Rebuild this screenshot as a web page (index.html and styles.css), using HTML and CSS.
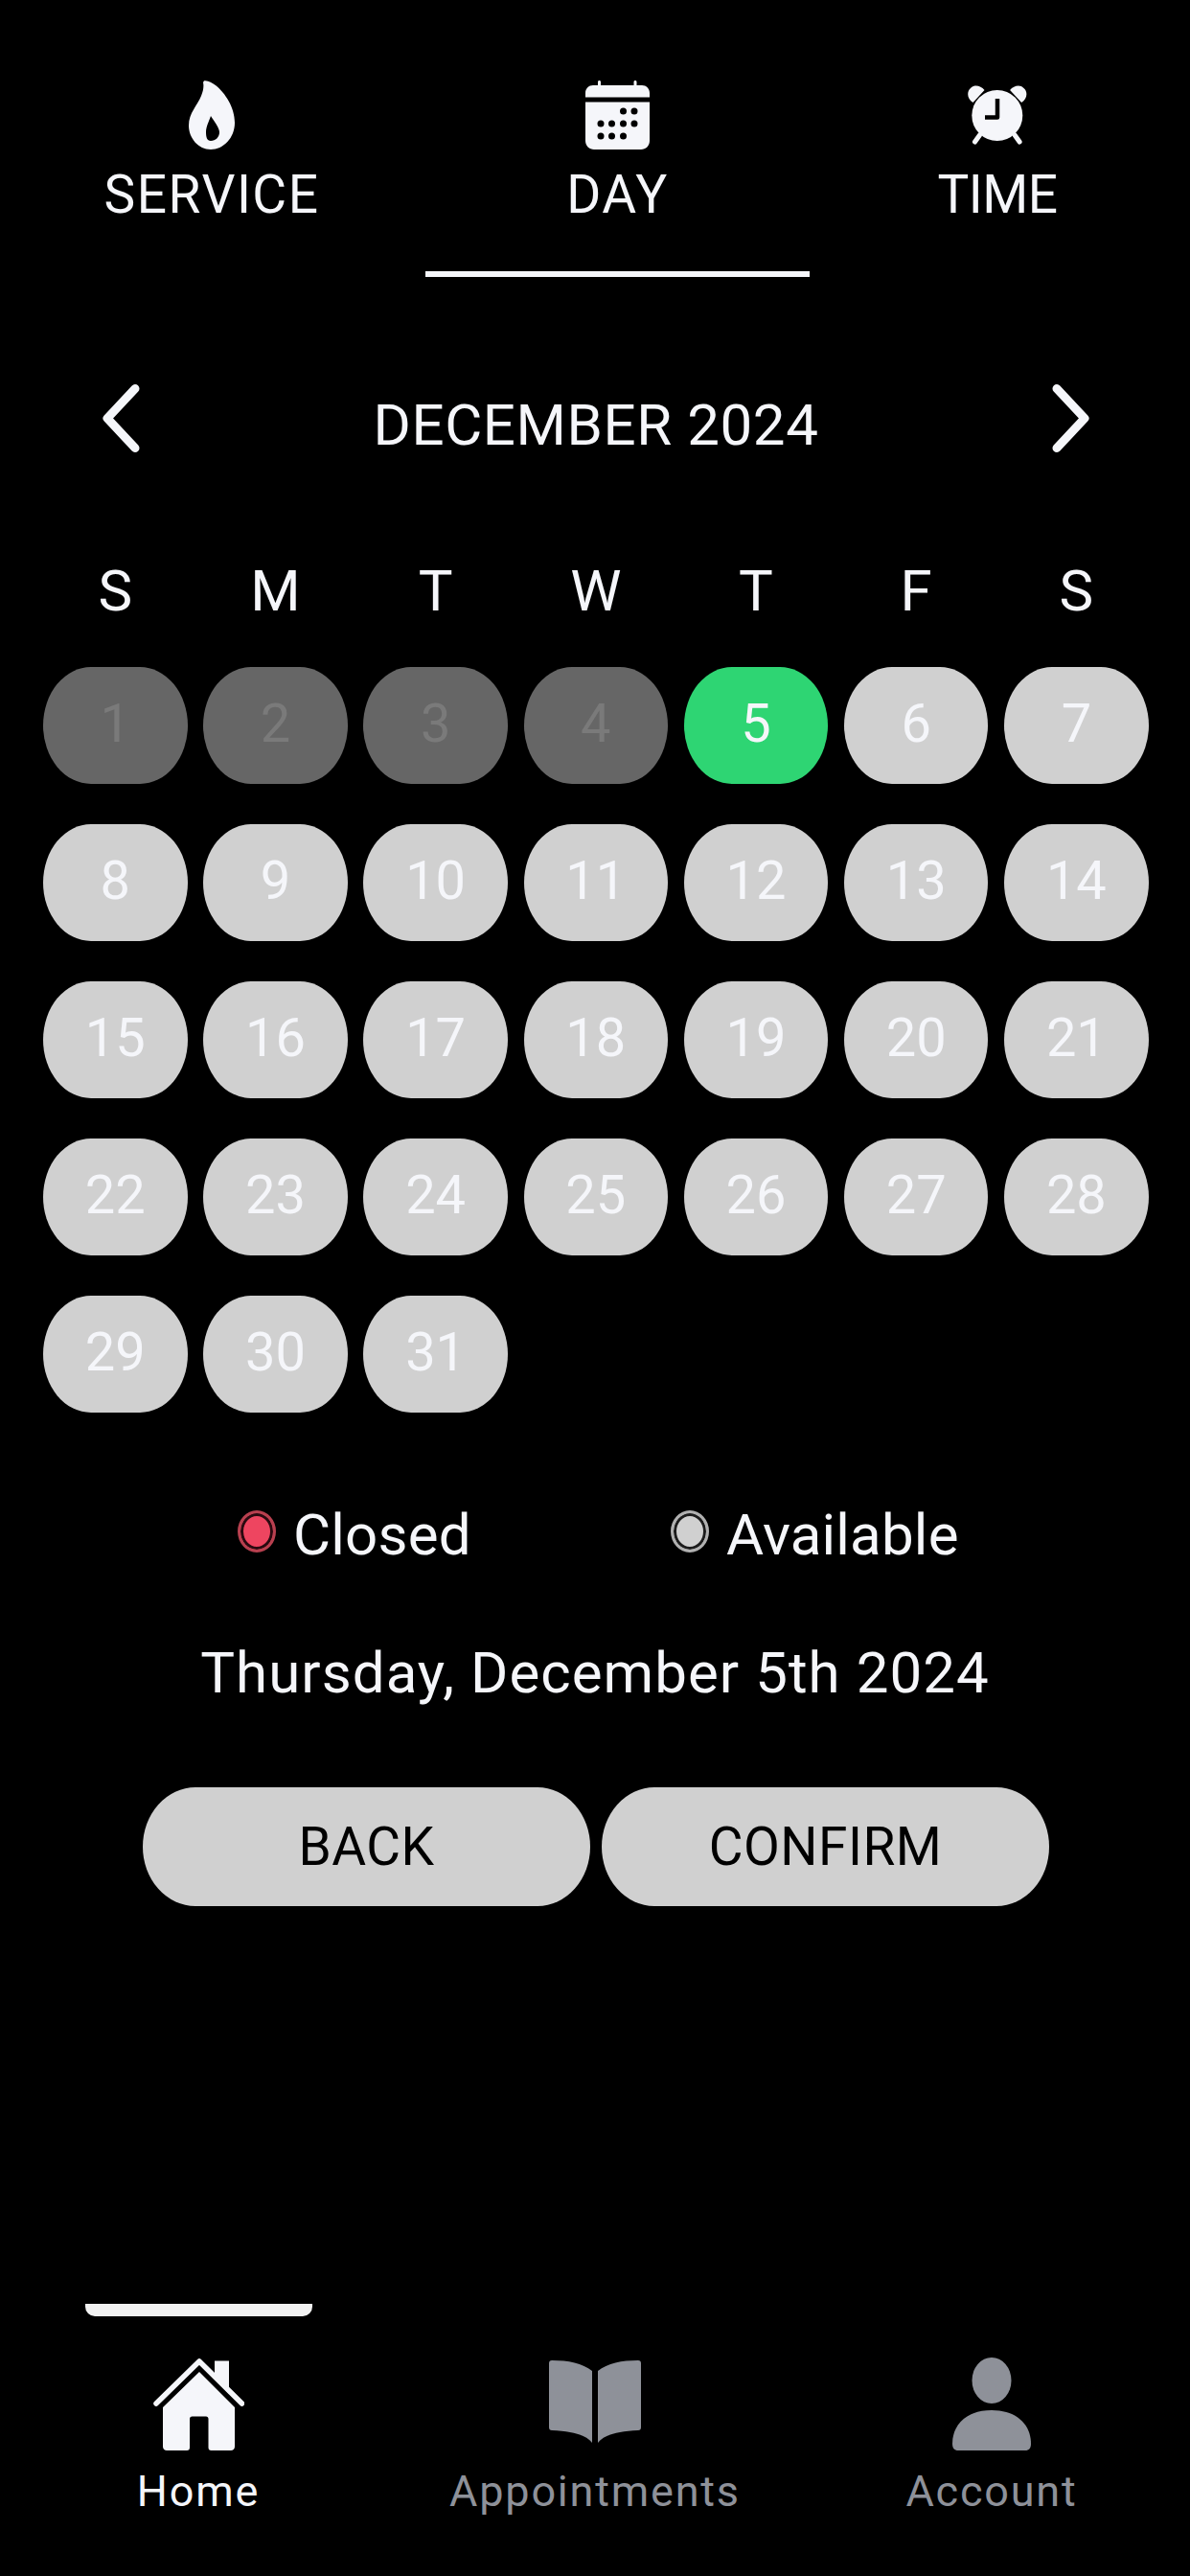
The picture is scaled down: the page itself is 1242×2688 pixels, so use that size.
FILE: index.html
```html
<!DOCTYPE html>
<html lang="en">
<head>
  <meta charset="UTF-8">
  <title>Book a day</title>
  <link rel="stylesheet" href="styles.css">
</head>
<body>
  <div class="screen">
    <div class="tabs">
      <div class="tab tab-service">
        <svg class="tab-icon" width="48" height="72" viewBox="38 14 48 72"><path fill="#f5f6fa" fill-rule="evenodd" d="M54 14.3C58 13.6 62 16 66 19C76 27 86 42 86 58C86 74 74 86 61 86C48 86 38 74 38 61C38 48 47 40 51 30C53 25 54 20 53 16ZM61 51C59 57 56 62 56 68C56 73 57 77 61 77C66 77 70 73 70 68C70 63 64 56 61 51Z"/></svg>
        <span class="tab-label">SERVICE</span>
      </div>
      <div class="tab tab-day">
        <svg class="tab-icon" width="67" height="72" viewBox="31 14 67 72"><path fill="#f5f6fa" d="M44 19V15.5C44 13.5 47 13.5 47 15.5V19H81.5V15.5C81.5 13.5 84.5 13.5 84.5 15.5V19H90C94.500 19 98 22.500 98 27V31.500H31V27C31 22.500 34.500 19 39 19Z"/><path fill="#f5f6fa" fill-rule="evenodd" d="M31 36.500H98V77C98 82 94 86 89 86H40C35 86 31 82 31 77Z"/><g fill="#000"><circle cx="70.500" cy="46" r="3.500"/><circle cx="82" cy="46" r="3.500"/><circle cx="47" cy="59" r="3.500"/><circle cx="58.500" cy="59" r="3.500"/><circle cx="70.500" cy="59" r="3.500"/><circle cx="82" cy="59" r="3.500"/><circle cx="47" cy="72" r="3.500"/><circle cx="58.500" cy="72" r="3.500"/><circle cx="70.500" cy="72" r="3.500"/></g></svg>
        <span class="tab-label">DAY</span>
      </div>
      <div class="tab tab-time">
        <svg class="tab-icon" width="62" height="62" viewBox="42.500 19 62 62"><g fill="#f5f6fa"><circle cx="73.300" cy="50.500" r="26.500"/><path d="M60 24C56 19 49 18 45.500 22C41 26 42 33 48 37Z"/><path d="M86.600 24C90.600 19 97.600 18 101 22C105.600 26 104.600 33 98.600 37Z"/></g><path fill="none" stroke="#f5f6fa" stroke-width="5" stroke-linecap="round" d="M55 71L50 78M91.600 71L96.600 78"/><path fill="none" stroke="#000" stroke-width="4.500" stroke-linejoin="round" d="M73.500 33V52.500H60.500"/></svg>
        <span class="tab-label">TIME</span>
      </div>
    </div>
    <div class="tab-underline-row"><div class="tab-underline"></div></div>

    <div class="month-bar">
      <svg class="chevron" width="40" height="71" viewBox="0 0 40 71"><path fill="none" stroke="#f5f6fa" stroke-width="9" stroke-linecap="round" stroke-linejoin="round" d="M34 4.500L5 35.500L34 66.500"/></svg>
      <span class="month-title">DECEMBER 2024</span>
      <svg class="chevron" width="40" height="71" viewBox="0 0 40 71"><path fill="none" stroke="#f5f6fa" stroke-width="9" stroke-linecap="round" stroke-linejoin="round" d="M6 4.500L35 35.500L6 66.500"/></svg>
    </div>

    <div class="week-row">
      <span>S</span><span>M</span><span>T</span><span>W</span><span>T</span><span>F</span><span>S</span>
    </div>

    <div class="days">
      <div class="day past">1</div>
      <div class="day past">2</div>
      <div class="day past">3</div>
      <div class="day past">4</div>
      <div class="day picked">5</div>
      <div class="day">6</div>
      <div class="day">7</div>
      <div class="day">8</div>
      <div class="day">9</div>
      <div class="day">10</div>
      <div class="day">11</div>
      <div class="day">12</div>
      <div class="day">13</div>
      <div class="day">14</div>
      <div class="day">15</div>
      <div class="day">16</div>
      <div class="day">17</div>
      <div class="day">18</div>
      <div class="day">19</div>
      <div class="day">20</div>
      <div class="day">21</div>
      <div class="day">22</div>
      <div class="day">23</div>
      <div class="day">24</div>
      <div class="day">25</div>
      <div class="day">26</div>
      <div class="day">27</div>
      <div class="day">28</div>
      <div class="day">29</div>
      <div class="day">30</div>
      <div class="day">31</div>
    </div>

    <div class="legend">
      <div class="legend-item legend-closed"><span class="dot dot-closed"></span>Closed</div>
      <div class="legend-item legend-open"><span class="dot dot-open"></span>Available</div>
    </div>

    <div class="picked-date">Thursday, December 5th 2024</div>

    <div class="actions">
      <button class="action">BACK</button>
      <button class="action">CONFIRM</button>
    </div>

    <div class="spacer"></div>

    <div class="bottom-nav">
      <div class="nav-indicator-row"><div class="nav-indicator"></div></div>
      <div class="nav-items">
        <div class="nav-item active">
          <svg width="95" height="97" viewBox="20 20 95 97"><g fill="#f5f6fa"><path d="M84 23.500H99V58L84 42Z"/><path d="M68 35L105 72V113C105 115.500 103 117 101 117H80.500C78.500 117 77.500 116 77.500 114V84C77.500 82.500 76.500 81.500 75 81.500H60.500C59 81.500 58 82.500 58 84V114C58 116 57 117 55 117H34C32 117 30 115.500 30 113V72Z"/></g><path fill="none" stroke="#f5f6fa" stroke-width="5.500" stroke-linecap="round" stroke-linejoin="round" d="M23 68L68 24L112.500 68"/></svg>
          <span class="nav-label">Home</span>
        </div>
        <div class="nav-item">
          <svg width="96" height="97" viewBox="0 -3 96 97"><g fill="#8e9199"><path d="M3 0C20 0 35 3 45 11V86C39 78 25 74 3 73C1 73 0 72 0 70V3C0 1 1 0 3 0Z"/><path d="M93 0C76 0 61 3 51 11V86C57 78 71 74 93 73C95 73 96 72 96 70V3C96 1 95 0 93 0Z"/></g></svg>
          <span class="nav-label">Appointments</span>
        </div>
        <div class="nav-item">
          <svg width="82" height="97" viewBox="0 0 82 97"><g fill="#8e9199"><ellipse cx="41" cy="24" rx="20.500" ry="24"/><path d="M0 90C0 70 15 55 41 55C67 55 82 70 82 90C82 94.500 80 97 76 97H6C2 97 0 94.500 0 90Z"/></g></svg>
          <span class="nav-label">Account</span>
        </div>
      </div>
    </div>
  </div>
</body>
</html>
```

FILE: styles.css
```css
* {
  box-sizing: border-box;
}
body {
  margin: 0;
  background-color: #000;
  color: #f5f6fa;
  font-family: Roboto, 'Liberation Sans', sans-serif;
}
.screen {
  width: 1242px;
  height: 2688px;
  display: flex;
  flex-direction: column;
  overflow: hidden;
}

/* steps */
.tabs {
  display: grid;
  grid-template-columns: 444px 401px 397px;
  padding-top: 84px;
  height: 235px;
}
.tab {
  display: flex;
  flex-direction: column;
  align-items: center;
}
.tab-icon {
  display: block;
  height: 72px;
}
.tab-service {
  padding-right: 2px;
}
.tab-time {
  padding-right: 5px;
}
.tab-label {
  margin-top: 15px;
  font-size: 55px;
  line-height: 64px;
  letter-spacing: 1.5px;
}
.tab-time .tab-label {
  letter-spacing: -0.5px;
}
.tab-underline-row {
  height: 54px;
  padding-top: 48px;
  padding-left: 444px;
}
.tab-underline {
  width: 401px;
  height: 6px;
  background-color: #f5f6fa;
}

/* month */
.month-bar {
  display: flex;
  justify-content: space-between;
  align-items: center;
  margin-top: 112px;
  padding: 0 105px 0 107px;
  height: 71px;
}
.month-title {
  font-size: 60px;
  line-height: 71px;
  margin-top: 14px;
  letter-spacing: 0.6px;
}
.week-row {
  display: grid;
  grid-template-columns: repeat(7, 150.500px);
  column-gap: 16.700px;
  padding-left: 45px;
  margin-top: 110px;
  font-size: 60px;
  line-height: 70px;
  text-align: center;
}
.days {
  display: grid;
  grid-template-columns: repeat(7, 150.500px);
  grid-auto-rows: 122px;
  gap: 42px 16.700px;
  padding-left: 45px;
  margin-top: 44px;
}
.day {
  display: flex;
  align-items: center;
  justify-content: center;
  padding-bottom: 4px;
  border-radius: 50px / 61px;
  background-color: #d0d0d0;
  font-size: 56px;
}
.day.past {
  background-color: #666;
  color: #7a7a7a;
}
.day.picked {
  background-color: #2ed573;
}

/* legend */
.legend {
  display: flex;
  margin-top: 93px;
  padding-left: 248px;
  font-size: 60px;
  line-height: 70px;
  letter-spacing: 0.2px;
}
.legend-item {
  display: flex;
  align-items: center;
}
.legend-closed {
  width: 452px;
}
.dot {
  width: 40px;
  height: 44px;
  margin-right: 18px;
  border-radius: 50%;
  border: 3px solid;
  position: relative;
  top: -4px;
}
.dot-closed {
  border-color: #b8404f;
  background-color: #ee4560;
  box-shadow: inset 0 0 0 3px #2a0a10;
}
.dot-open {
  border-color: #b0b0b0;
  background-color: #d0d0d0;
  box-shadow: inset 0 0 0 3px #1c1c1c;
}
.picked-date {
  margin-top: 74px;
  font-size: 60px;
  line-height: 70px;
  text-align: center;
  letter-spacing: 1.050px;
}
.actions {
  display: flex;
  gap: 12px;
  padding-left: 149px;
  margin-top: 84px;
}
.action {
  width: 467px;
  height: 124px;
  border: none;
  border-radius: 55px / 62px;
  background-color: #d0d0d0;
  color: #000;
  font-family: inherit;
  font-size: 55px;
  letter-spacing: 0.5px;
}
.spacer {
  flex: 1;
}

/* bottom nav */
.bottom-nav {
  height: 284px;
}
.nav-indicator-row {
  padding-left: 89px;
}
.nav-indicator {
  width: 237px;
  height: 13px;
  background-color: #f2f2f2;
  border-radius: 0 0 10px 10px;
}
.nav-items {
  display: grid;
  grid-template-columns: repeat(3, 414px);
  margin-top: 43px;
}
.nav-item {
  display: flex;
  flex-direction: column;
  align-items: center;
  color: #8e9199;
}
.nav-item svg {
  display: block;
}
.nav-item.active {
  color: #f5f6fa;
}
.nav-label {
  margin-top: 16px;
  font-size: 45px;
  line-height: 54px;
  letter-spacing: 1.800px;
}
```
